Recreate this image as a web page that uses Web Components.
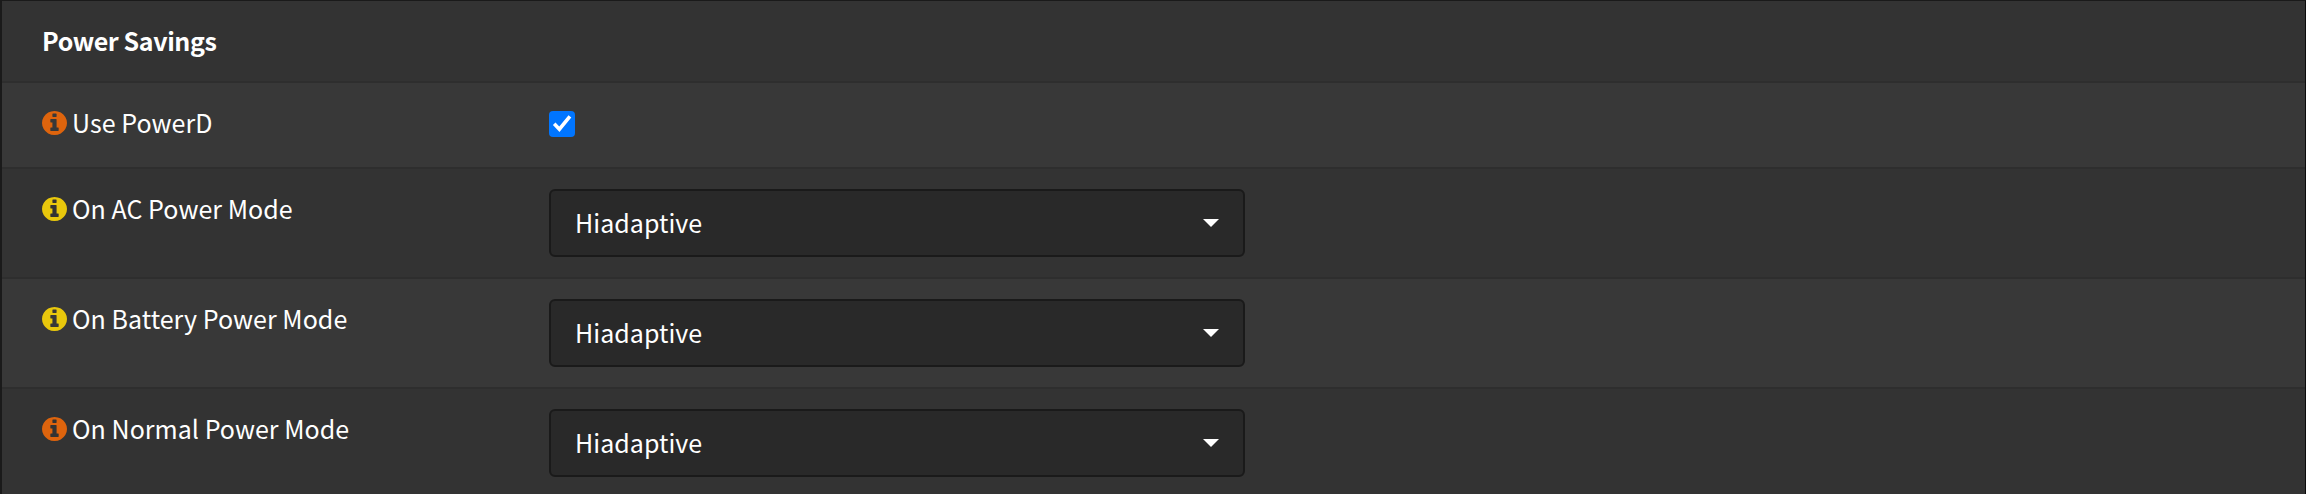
<!DOCTYPE html>
<html lang="en">
<head>
<meta charset="utf-8">
<title>Power Savings</title>
<style>
html, body { margin: 0; height: 494px; overflow: hidden; background: #333; }
body { color: #fff; font-family: "Source Sans Pro", "Noto Sans CJK SC", sans-serif; font-size: 25px; line-height: 40px; letter-spacing: 0.04px; }
</style>
</head>
<body>
<settings-panel>
  <settings-heading>Power Savings</settings-heading>
  <settings-row label="Use PowerD" tone="orange" striped short><check-box></check-box></settings-row>
  <settings-row label="On AC Power Mode" tone="yellow"><select-box>Hiadaptive</select-box></settings-row>
  <settings-row label="On Battery Power Mode" tone="yellow" striped><select-box>Hiadaptive</select-box></settings-row>
  <settings-row label="On Normal Power Mode" tone="orange"><select-box>Hiadaptive</select-box></settings-row>
</settings-panel>
<script>
const define = (name, html, setup) => customElements.define(name, class extends HTMLElement {
  connectedCallback() {
    if (this.shadowRoot) return;
    this.attachShadow({ mode: 'open' }).innerHTML = html;
    if (setup) setup(this, this.shadowRoot);
  }
});

define('settings-panel', `
<style>
:host { display: block; box-sizing: border-box; height: 494px; overflow: hidden;
  border: solid #1a1a1a; border-width: 1px 1px 0 2px; border-right-color: #0c0c0c; background: #333; }
</style><slot></slot>`);

define('settings-heading', `
<style>
:host { display: block; box-sizing: border-box; height: 80px; padding: 19px 40px 0; font-weight: 700; letter-spacing: -0.4px; }
</style><slot></slot>`);

define('info-icon', `
<style>
:host { display: block; width: 25px; height: 24px; color: #de640d; }
:host([tone=yellow]) { color: #e9c80c; }
svg { display: block; }
</style>
<svg width="25" height="24" viewBox="0 0 1536 1536" preserveAspectRatio="none" fill="currentColor"><path d="M1024 1248v-160q0-14-9-23t-23-9h-96v-512q0-14-9-23t-23-9h-320q-14 0-23 9t-9 23v160q0 14 9 23t23 9h96v320h-96q-14 0-23 9t-9 23v160q0 14 9 23t23 9h448q14 0 23-9t9-23zM896 352v-160q0-14-9-23t-23-9h-192q-14 0-23 9t-9 23v160q0 14 9 23t23 9h192q14 0 23-9t9-23zM1536 768q0 209-103 385.5t-279.5 279.5-385.5 103-385.5-103-279.5-279.5-103-385.5 103-385.5 279.5-279.5 385.5-103 385.5 103 279.5 279.5 103 385.5z"/></svg>`);

define('settings-row', `
<style>
:host { display: grid; grid-template-columns: 507px 1fr; box-sizing: border-box; height: 110px;
  padding: 19px 40px 0; border-top: 2px solid #2e2e2e; background: #333; }
:host([striped]) { background: #383838; }
:host([short]) { height: 86px; }
.label { display: flex; align-items: flex-start; gap: 5px; white-space: nowrap; }
info-icon { margin-top: 9px; }
.control { padding-top: 1px; }
</style>
<div class="label"><info-icon></info-icon><span></span></div>
<div class="control"><slot></slot></div>`, (host, root) => {
  root.querySelector('span').textContent = host.getAttribute('label');
  root.querySelector('info-icon').setAttribute('tone', host.getAttribute('tone'));
});

define('check-box', `
<style>
:host { display: block; width: 26px; height: 26px; margin-top: 8px; border-radius: 4px; background: #0075ff; }
svg { display: block; }
</style>
<svg width="26" height="26" viewBox="0 0 26 26" fill="none" stroke="#fff" stroke-width="3.6"><path d="M5.2 12.8 10.4 18.2 20.9 5.4"/></svg>`);

define('select-box', `
<style>
:host { display: flex; justify-content: space-between; align-items: flex-start; box-sizing: border-box;
  width: 696px; height: 68px; padding: 11px 24px 0; border: 2px solid #1a1a1a; border-radius: 6px; background: #292929; }
svg { display: block; margin-top: 17px; }
</style>
<span><slot></slot></span>
<svg width="16" height="8" viewBox="0 0 16 8" fill="#fff"><path d="M0 0h16L8 8z"/></svg>`);
</script>
</body>
</html>
